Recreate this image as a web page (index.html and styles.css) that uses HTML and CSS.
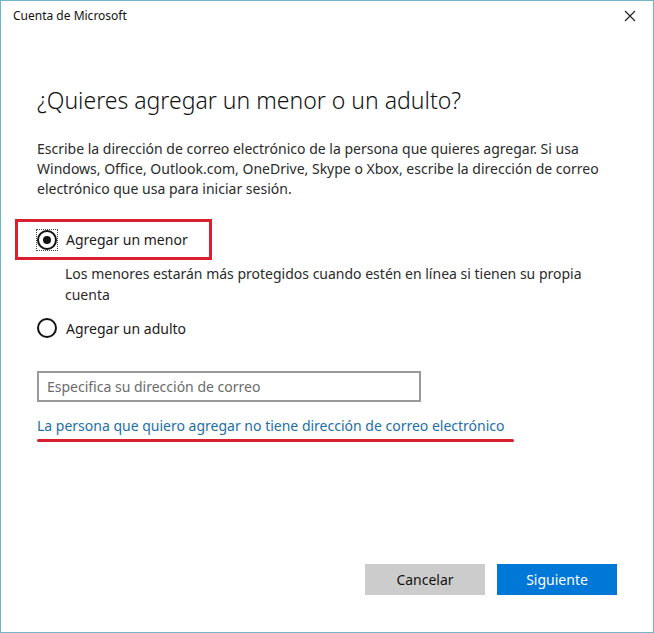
FILE: index.html
```html
<!DOCTYPE html>
<html lang="es">
<head>
    <meta charset="UTF-8">
    <title>Cuenta de Microsoft</title>
    <link rel="stylesheet" href="styles.css">
</head>
<body>
    <div class="window">
        <div class="titlebar">
            <span class="title">Cuenta de Microsoft</span>
            <svg class="close" width="12" height="12" viewBox="0 0 12 12">
                <path d="M1 1 L11 11 M11 1 L1 11" stroke="#222" stroke-width="1.2" fill="none"/>
            </svg>
        </div>
        <div class="content">
            <h1>¿Quieres agregar un menor o un adulto?</h1>
            <p class="intro">Escribe la dirección de correo electrónico de la persona que quieres agregar. Si usa Windows, Office, Outlook.com, OneDrive, Skype o Xbox, escribe la dirección de correo electrónico que usa para iniciar sesión.</p>

            <div class="highlight">
                <label class="option">
                    <span class="radio checked"><span class="focus"></span></span>
                    Agregar un menor
                </label>
            </div>
            <p class="option-note">Los menores estarán más protegidos cuando estén en línea si tienen su propia cuenta</p>

            <label class="option second">
                <span class="radio"></span>
                Agregar un adulto
            </label>

            <input type="text" class="email" placeholder="Especifica su dirección de correo">

            <a href="#" class="link">La persona que quiero agregar no tiene dirección de correo electrónico</a>
            <div class="underline"></div>
        </div>
        <div class="footer">
            <button class="btn cancel">Cancelar</button>
            <button class="btn next">Siguiente</button>
        </div>
    </div>
</body>
</html>
```
FILE: styles.css
```css
body {
    margin: 0;
    font-family: 'Segoe UI', 'Noto Sans', sans-serif;
    background-color: #ffffff;
    color: #222222;
}
.window {
    width: 654px;
    height: 633px;
    box-sizing: border-box;
    border: 1px solid #6fb6c9;
    display: flex;
    flex-direction: column;
    background-color: #ffffff;
}
.titlebar {
    display: flex;
    justify-content: space-between;
    align-items: center;
    height: 30px;
    padding: 0 17px 0 12px;
}
.title {
    font-size: 12px;
    color: #111111;
    margin-top: -2px;
}
.close {
    margin-top: -1px;
}
.content {
    flex: 1;
    padding: 0 36px;
}
h1 {
    font-weight: 300;
    font-size: 23px;
    color: #111111;
    margin: 54px 0 0 0;
    line-height: 30px;
}
.intro {
    font-size: 14px;
    line-height: 20px;
    color: #2b2b2b;
    margin: 24px 0 0 0;
}
.highlight {
    width: 172px;
    height: 35px;
    margin: 20px 0 0 -22px;
    border: 3px solid #d9202e;
    display: flex;
    align-items: center;
    padding-left: 19px;
}
.option {
    display: flex;
    align-items: center;
    gap: 9px;
    font-size: 14px;
    color: #1a1a1a;
}
.radio {
    position: relative;
    width: 16px;
    height: 16px;
    border: 2px solid #111111;
    border-radius: 50%;
    box-sizing: content-box;
    flex: none;
}
.radio.checked::after {
    content: "";
    position: absolute;
    left: 4px;
    top: 4px;
    width: 8px;
    height: 8px;
    border-radius: 50%;
    background-color: #111111;
}
.radio .focus {
    position: absolute;
    left: -3px;
    top: -3px;
    right: -3px;
    bottom: -3px;
    border: 1px dotted #444444;
}
.option-note {
    font-size: 14px;
    line-height: 21px;
    color: #2b2b2b;
    margin: 3px 0 0 28px;
    padding-right: 20px;
}
.second {
    margin-top: 13px;
    margin-left: 0;
}
.email {
    display: block;
    width: 384px;
    height: 31px;
    box-sizing: border-box;
    margin-top: 33px;
    border: 2px solid #999999;
    padding: 0 8px;
    font-family: inherit;
    font-size: 14px;
}
.email::placeholder {
    color: #6b6b6b;
}
.link {
    display: block;
    margin-top: 14px;
    font-size: 14px;
    line-height: 20px;
    color: #1d6fa5;
    text-decoration: none;
}
.underline {
    width: 477px;
    height: 3px;
    border-radius: 2px;
    background-color: #d9202e;
    margin-top: 3px;
}
.footer {
    display: flex;
    justify-content: flex-end;
    gap: 12px;
    padding: 0 36px 37px 0;
}
.btn {
    width: 120px;
    height: 31px;
    border: none;
    font-family: inherit;
    font-size: 14px;
}
.cancel {
    background-color: #cccccc;
    color: #111111;
}
.next {
    background-color: #0078d7;
    color: #ffffff;
}
```
